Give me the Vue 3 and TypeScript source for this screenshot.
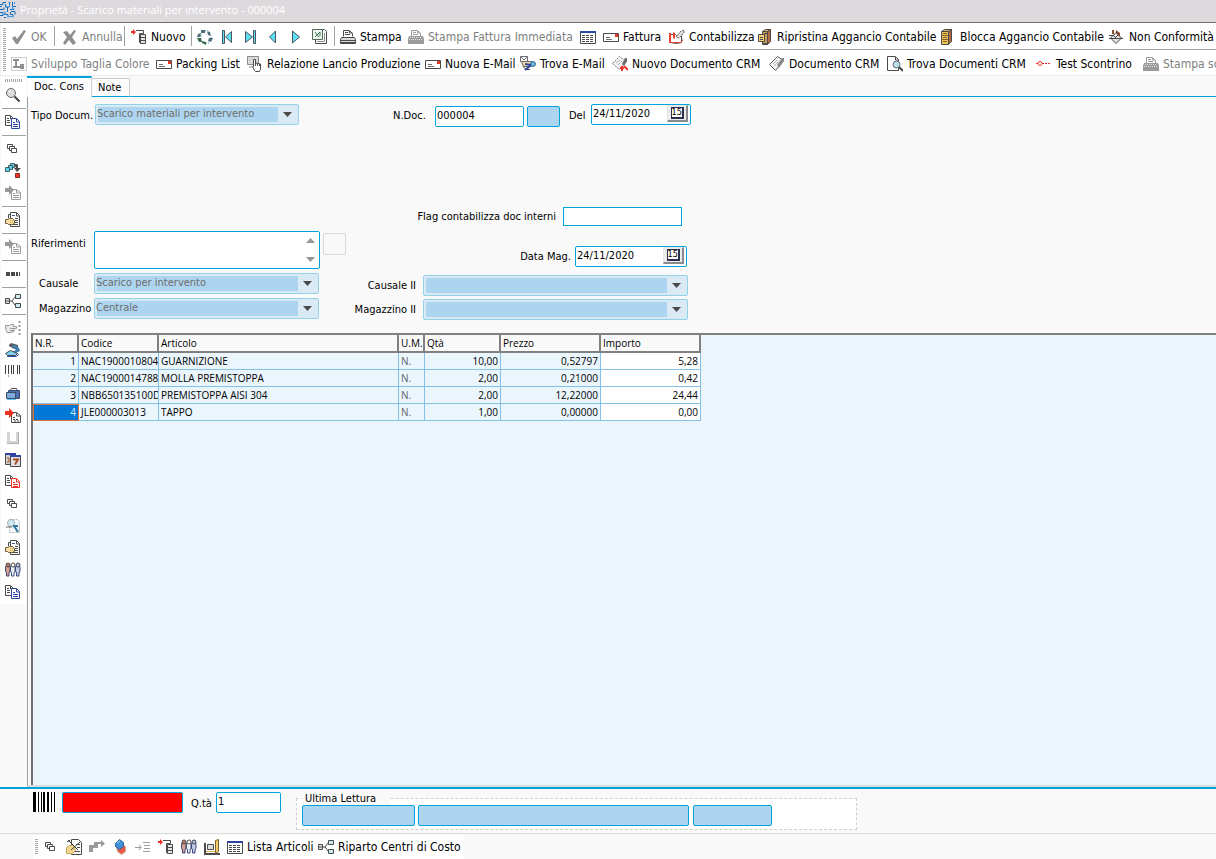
<script setup lang="ts">
import { ref } from 'vue'

interface Tool {
  icon?: string
  label?: string
  title?: string
  disabled?: boolean
  separator?: boolean
}

interface Line {
  nr: number
  codice: string
  articolo: string
  um: string
  qta: string
  prezzo: string
  importo: string
}

const mainTools: Tool[] = [
  { icon: 'check', label: 'OK', disabled: true },
  { separator: true },
  { icon: 'cross', label: 'Annulla', disabled: true },
  { separator: true },
  { icon: 'new', label: 'Nuovo' },
  { separator: true },
  { icon: 'refresh', title: 'Aggiorna' },
  { icon: 'first', title: 'Primo' },
  { icon: 'last', title: 'Ultimo' },
  { icon: 'prev', title: 'Precedente' },
  { icon: 'next', title: 'Successivo' },
  { icon: 'excel', title: 'Excel' },
  { separator: true },
  { icon: 'printer', label: 'Stampa' },
  { icon: 'printer-off', label: 'Stampa Fattura Immediata', disabled: true },
  { icon: 'grid', title: 'Griglia' },
  { icon: 'mail', label: 'Fattura' },
  { icon: 'ledger', label: 'Contabilizza' },
  { icon: 'cabinet-open', label: 'Ripristina Aggancio Contabile' },
  { icon: 'cabinet', label: 'Blocca Aggancio Contabile' },
  { icon: 'diamond', label: 'Non Conformità' },
]

const crmTools: Tool[] = [
  { icon: 'size', label: 'Sviluppo Taglia Colore', disabled: true },
  { icon: 'mail', label: 'Packing List' },
  { icon: 'touch', label: 'Relazione Lancio Produzione' },
  { icon: 'mail', label: 'Nuova E-Mail' },
  { icon: 'mail-find', label: 'Trova E-Mail' },
  { icon: 'crm-new', label: 'Nuovo Documento CRM' },
  { icon: 'crm', label: 'Documento CRM' },
  { icon: 'page-find', label: 'Trova Documenti CRM' },
  { icon: 'link', label: 'Test Scontrino' },
  { icon: 'printer-off', label: 'Stampa scontrino', disabled: true },
]

const sideTools: Tool[] = [
  { icon: 'search', title: 'Cerca' },
  { separator: true },
  { icon: 'copy', title: 'Copia' },
  { separator: true },
  { icon: 'stack', title: 'Finestre' },
  { icon: 'flow', title: 'Flusso' },
  { icon: 'import-off', title: 'Importa', disabled: true },
  { separator: true },
  { icon: 'hand-page', title: 'Documento' },
  { separator: true },
  { icon: 'import-off', title: 'Importa riga', disabled: true },
  { separator: true },
  { icon: 'dots', title: 'Altro' },
  { separator: true },
  { icon: 'tree', title: 'Struttura' },
  { separator: true },
  { icon: 'point-off', title: 'Indica', disabled: true },
  { icon: 'scanner', title: 'Scanner' },
  { icon: 'barcode', title: 'Codice a barre' },
  { icon: 'case', title: 'Cartella' },
  { icon: 'import', title: 'Carica' },
  { icon: 'tray-off', title: 'Vassoio', disabled: true },
  { icon: 'calendar', title: 'Calendario' },
  { icon: 'copy-red', title: 'Duplica' },
  { icon: 'stack', title: 'Riepilogo' },
  { icon: 'page-zoom', title: 'Anteprima' },
  { icon: 'hand-page', title: 'Apri' },
  { icon: 'people', title: 'Contatti' },
  { icon: 'copy', title: 'Copia documento' },
]

const footTools: Tool[] = [
  { icon: 'stack', title: 'Finestre' },
  { icon: 'edit', title: 'Modifica' },
  { icon: 'step-off', title: 'Passo', disabled: true },
  { icon: 'gems', title: 'Varianti' },
  { icon: 'indent-off', title: 'Rientro', disabled: true },
  { icon: 'new', title: 'Nuova riga' },
  { icon: 'people', title: 'Contatti' },
  { icon: 'machine', title: 'Risorse' },
  { icon: 'grid', label: 'Lista Articoli' },
  { icon: 'tree', label: 'Riparto Centri di Costo' },
]

const lines: Line[] = [
  { nr: 1, codice: 'NAC1900010804', articolo: 'GUARNIZIONE', um: 'N.', qta: '10,00', prezzo: '0,52797', importo: '5,28' },
  { nr: 2, codice: 'NAC1900014788', articolo: 'MOLLA PREMISTOPPA', um: 'N.', qta: '2,00', prezzo: '0,21000', importo: '0,42' },
  { nr: 3, codice: 'NBB650135100D', articolo: 'PREMISTOPPA AISI 304', um: 'N.', qta: '2,00', prezzo: '12,22000', importo: '24,44' },
  { nr: 4, codice: 'JLE000003013', articolo: 'TAPPO', um: 'N.', qta: '1,00', prezzo: '0,00000', importo: '0,00' },
]

const selected = ref(4)
const numero = ref('000004')
const del = ref('24/11/2020')
const dataMag = ref('24/11/2020')
const quantita = ref('1')
</script>

<template>
  <div class="window">
    <svg class="defs" aria-hidden="true">
      <symbol id="i-check" viewBox="0 0 16 16"><path d="M1 9l3-2 2 3 7-9 2 1-8 13H5z" fill="#8f8f8f" /></symbol>
      <symbol id="i-cross" viewBox="0 0 16 16"><path d="M1 3l4-1 3 4 4-5 2 1-4 6 4 6-3 2-4-5-4 5-2-2 4-6z" fill="#8f8f8f" /></symbol>
      <symbol id="i-new" viewBox="0 0 16 16">
        <path d="M0 2h2V0l3 3-3 3V4H0z" fill="#ee2f24" />
        <path d="M5 1.500h7.500v3h-4v9h2" fill="none" stroke="#4a4a4a" />
        <path d="M9.500 5.500h5v9h-5z" fill="#e6e6e6" stroke="#4a4a4a" />
        <path d="M9 8.500h6M9 11.500h6" stroke="#4a4a4a" />
      </symbol>
      <symbol id="i-refresh" viewBox="0 0 16 16">
        <path d="M4 1h4v3H4zM1 5l3-1v4H0zM10 2l3 1 1 4-3-1zM12 9h4l-2 4-3-1z" fill="#4f6f78" />
        <path d="M0 9h4l1 4H2zM5 12l4 1v3l-4-2z" fill="#3e6b4f" />
        <path d="M8 2h3M4 5v3M9 14h3M14 6v3" stroke="#a9c8d0" stroke-width="2" stroke-dasharray="1 1" />
      </symbol>
      <symbol id="i-first" viewBox="0 0 16 16"><path d="M2.500 1.500v13h2v-13z" fill="#5fe0f2" stroke="#4a5560" /><path d="M11.500 2.500v11L5.500 8z" fill="#5fe0f2" stroke="#4a5560" /></symbol>
      <symbol id="i-last" viewBox="0 0 16 16"><path d="M10.500 1.500v13h2v-13z" fill="#5fe0f2" stroke="#4a5560" /><path d="M2.500 2.500v11L9.500 8z" fill="#5fe0f2" stroke="#4a5560" /></symbol>
      <symbol id="i-prev" viewBox="0 0 16 16"><path d="M9.500 2v12L3.500 8z" fill="#5fe0f2" stroke="#4a5560" /></symbol>
      <symbol id="i-next" viewBox="0 0 16 16"><path d="M4.500 2v12L11.500 8z" fill="#5fe0f2" stroke="#4a5560" /></symbol>
      <symbol id="i-excel" viewBox="0 0 16 16">
        <path d="M4.500 3.500v11h11v-12l-2-2h-3" fill="#fff" stroke="#4a4a4a" />
        <path d="M1.500.5h10v10h-10z" fill="#f4f8f4" stroke="#4f6b58" />
        <path d="M4 3l4 5M9 3L4 8M8 4h2M8 6h2" stroke="#2f7a4a" />
        <path d="M13.500 4v8.500H6" fill="none" stroke="#8a8a8a" />
      </symbol>
      <symbol id="i-printer" viewBox="0 0 16 16">
        <path d="M3.500 7.500v-6h6l3 3v3" fill="#fff" stroke="#4a4a4a" />
        <path d="M5 3.500h3M5 5.500h5M9.500 2v2h3" fill="none" stroke="#4a4a4a" />
        <path d="M1.500 8.500h13l1 2v4H.5v-4z" fill="#d8d8d8" stroke="#4a4a4a" />
        <path d="M1 11.500h14M1 13.500h14" stroke="#4a4a4a" />
      </symbol>
      <symbol id="i-printer-off" viewBox="0 0 16 16">
        <path d="M3.500 7.500v-6h6l3 3v3" fill="#fff" stroke="#9a9a9a" />
        <path d="M5 3.500h3M5 5.500h5M9.500 2v2h3" fill="none" stroke="#9a9a9a" />
        <path d="M1 7h14l1 3v5H0v-5z" fill="#9a9a9a" />
        <path d="M2 8.500h12M1 10.500h14" stroke="#e2e2e2" stroke-dasharray="1 1" />
      </symbol>
      <symbol id="i-grid" viewBox="0 0 16 16">
        <path d="M.5 2.500h15v12H.5z" fill="#fff" stroke="#4a4a4a" />
        <path d="M0 2h16v2H0z" fill="#2f45a4" />
        <path d="M2 6.500h12M2 8.500h12M2 10.500h12M2 12.500h12" stroke="#4a4a4a" stroke-dasharray="3 1" />
      </symbol>
      <symbol id="i-mail" viewBox="0 0 16 16">
        <path d="M.5 4.500h15v8H.5z" fill="#fff" stroke="#4a4a4a" />
        <path d="M12 5h3v3h-3z" fill="#e8372c" />
        <path d="M3 8.500h4M3 10.500h6" stroke="#6f6f6f" />
      </symbol>
      <symbol id="i-ledger" viewBox="0 0 16 16">
        <path d="M1.500 5.500h5l1 1h5v7l-5 1-6-1z" fill="#fff" stroke="#4a4a4a" />
        <path d="M0 4h2v10H0zM4 3l2 1v6l-2-1z" fill="#ee4030" />
        <path d="M7 8l5-6 3-1v3l-5 5z" fill="#ddd" stroke="#6a6a6a" stroke-dasharray="2 1" /><path d="M2 13.500h10l2-3" fill="none" stroke="#ee4030" />
      </symbol>
      <symbol id="i-cabinet-open" viewBox="0 0 16 16">
        <path d="M5.500 2.500l3-2h5l-3 2z" fill="#d9b25e" stroke="#4a4a4a" /><path d="M5.500 2.500h5v13h-5z" fill="#c9a05a" stroke="#4a4a4a" />
        <path d="M10.500 2.500l3-2v12l-3 3z" fill="#b06c45" stroke="#4a4a4a" />
        <path d="M1.500 5.500h6v7h-6z" fill="#f4d270" stroke="#4a4a4a" /><path d="M3 8.500h3M3 10.500h3M6 14.500h4M7 4.500h3" stroke="#4a4a4a" />
      </symbol>
      <symbol id="i-cabinet" viewBox="0 0 16 16">
        <path d="M1.500 2.500l3-2h7l-3 2z" fill="#d9b25e" stroke="#4a4a4a" /><path d="M1.500 2.500h7v13h-7z" fill="#f1c858" stroke="#4a4a4a" />
        <path d="M8.500 2.500l3-2v12l-3 3z" fill="#b06c45" stroke="#4a4a4a" /><path d="M1 6.500h7M1 10.500h7M3 4.500h4M3 8.500h4M3 12.500h4" stroke="#7a5f2a" />
      </symbol>
      <symbol id="i-diamond" viewBox="0 0 16 16">
        <path d="M1.500 9L7 3.500 12.500 9 7 14.500z" fill="#e2e2e2" stroke="#4a4a4a" />
        <path d="M3 1h2v4H3zM7 1l4 3v4L7 4z" fill="#8c4a30" /><path d="M0 6.500h4M0 9.500h14M4 6l4 4M10 5l-5 5" stroke="#4a4a4a" />
      </symbol>
      <symbol id="i-size" viewBox="0 0 16 16">
        <path d="M.5 1.500h15v13H.5z" fill="none" stroke="#9a9a9a" stroke-dasharray="1 1" />
        <path d="M2 3h6v2H6v5h3V8h4v5H9v-1H2v-2h2V5H2z" fill="#8f8f8f" />
      </symbol>
      <symbol id="i-touch" viewBox="0 0 16 16">
        <path d="M.5.500h11v8H.5z" fill="#d8d8d8" stroke="#8a8a8a" /><path d="M2 11h3" stroke="#8a8a8a" />
        <path d="M5.500 10.500l2 4 1 1h4l1-2V8l-5-1V3.500h-2v7z" fill="#fff" stroke="#4a4a4a" /><path d="M8.500 6v4M10.500 8v2M12.500 8v2" stroke="#4a4a4a" />
      </symbol>
      <symbol id="i-mail-find" viewBox="0 0 16 16">
        <path d="M.5.500h7v5h-7zM1 1l3 3 3-3" fill="#fff" stroke="#6a6a6a" />
        <path d="M1.500 5.500h10v5h-8z" fill="#f0dca0" stroke="#6a6a6a" /><path d="M3 10.500l3 3h4" fill="none" stroke="#4a4a4a" />
        <circle cx="13" cy="8" r="2.500" fill="#5fb8e8" stroke="#4a6a8a" /><path d="M10 10l-5 4M5 8l6 1" stroke="#2f45a4" stroke-width="2" />
      </symbol>
      <symbol id="i-crm-new" viewBox="0 0 16 16">
        <path d="M.5 7.500l7-7 7 5-7 8z" fill="#f2f2f2" stroke="#7a7a7a" stroke-dasharray="2 1" /><path d="M4 7l4-3M6 9l4-4" stroke="#b5b5b5" />
        <path d="M10 8l3-6h2v3l-3 5z" fill="#6a6a6a" /><path d="M8 12h4M10 10v5M12 10l4 4" stroke="#e8372c" stroke-width="2" />
      </symbol>
      <symbol id="i-crm" viewBox="0 0 16 16">
        <path d="M.5 8.500l8-8 6 4-8 10z" fill="#f2f2f2" stroke="#5a5a5a" /><path d="M4 8l4-4M5 10l4-4" stroke="#b5b5b5" />
        <path d="M8 9l5-7h2v3l-5 7z" fill="#8a8a8a" />
      </symbol>
      <symbol id="i-page-find" viewBox="0 0 16 16">
        <path d="M.5.500h8l3 3v11H.5z" fill="#fff" stroke="#4a4a4a" /><path d="M8.500 1v3h3" fill="none" stroke="#4a4a4a" />
        <circle cx="9.500" cy="8.500" r="3.500" fill="#b6dff0" stroke="#6a6a6a" /><path d="M12 11l4 4" stroke="#4a4a4a" stroke-width="2" />
      </symbol>
      <symbol id="i-link" viewBox="0 0 16 16"><circle cx="4" cy="7.500" r="2" fill="#fff" stroke="#ee2f24" /><path d="M0 7.500h2M6 7.500h9" stroke="#ee2f24" stroke-dasharray="2 1" /></symbol>
      <symbol id="i-search" viewBox="0 0 16 16"><circle cx="6" cy="6" r="4.500" fill="#dcdcdc" stroke="#6a6a6a" /><path d="M9.500 9.500l5 5" stroke="#3f3f3f" stroke-width="2" /><path d="M4 5l2-2" stroke="#fff" /></symbol>
      <symbol id="i-copy" viewBox="0 0 16 16">
        <path d="M.5 1.500h5l3 3v7h-8z" fill="#fff" stroke="#4a4a4a" />
        <path d="M5.500 2v3h3M2 4.500h2M2 6.500h3M2 8.500h3" fill="none" stroke="#4a4a4a" />
        <path d="M6.500 4.500h5l3 3v7h-8z" fill="#fff" stroke="#2f45a4" />
        <path d="M11.500 5v3h3M8 8.500h2M8 10.500h5M8 12.500h5" fill="none" stroke="#2f45a4" />
      </symbol>
      <symbol id="i-copy-red" viewBox="0 0 16 16">
        <path d="M.5 1.500h5l3 3v7h-8z" fill="#fff" stroke="#4a4a4a" />
        <path d="M5.500 2v3h3M2 4.500h2M2 6.500h3M2 8.500h3" fill="none" stroke="#4a4a4a" />
        <path d="M6.500 4.500h5l3 3v6h-8z" fill="#fff" stroke="#ee2f24" />
        <path d="M11.500 5v3h3M8 8.500h2M8 10.500h5M8 12.500h5" fill="none" stroke="#ee2f24" />
      </symbol>
      <symbol id="i-stack" viewBox="0 0 16 16">
        <path d="M2.500 3.500h5v4h-5z" fill="#fff" stroke="#4a4a4a" /><path d="M4.500 5.500h5v4h-5z" fill="#fff" stroke="#4a4a4a" /><path d="M6.500 7.500h5v4h-5z" fill="#fff" stroke="#4a4a4a" />
      </symbol>
      <symbol id="i-flow" viewBox="0 0 16 16">
        <path d="M5.500.500h4v4h-4z" fill="#5fd3ee" stroke="#3f5f66" /><path d="M3.500 2.500h4v4h-4z" fill="#5fd3ee" stroke="#3f5f66" /><path d="M.5 4.500h4v4h-4z" fill="#5fd3ee" stroke="#3f5f66" />
        <path d="M9 1h3l1 1v3h3l-4 4-3-4h2z" fill="#4a4a4a" /><path d="M10.500 10.500h4v4h-4z" fill="#ee2f24" stroke="#8a2a20" />
      </symbol>
      <symbol id="i-import-off" viewBox="0 0 16 16">
        <path d="M6.500 4.500h5l4 3v7h-9z" fill="#fff" stroke="#9a9a9a" /><path d="M11.500 5v3h4M8 8.500h2M8 10.500h6M8 12.500h6" fill="none" stroke="#9a9a9a" /><path d="M0 3h4V0l5 5-5 5V7H0z" fill="#9a9a9a" />
      </symbol>
      <symbol id="i-import" viewBox="0 0 16 16">
        <path d="M6.500 4.500h5l4 3v7h-9z" fill="#fff" stroke="#4a4a4a" /><path d="M11.500 5v3h4" fill="none" stroke="#4a4a4a" /><path d="M8 9.500h2M8 11.500h6M9 13h5" stroke="#4a4a4a" stroke-dasharray="2 1" /><path d="M0 3h4V0l5 5-5 5V7H0z" fill="#ee2f24" />
      </symbol>
      <symbol id="i-hand-page" viewBox="0 0 16 16">
        <path d="M5.500 14.500v-14h6l3 3v11z" fill="#fff" stroke="#4a4a4a" /><path d="M11.500 1v3h3M3.500 6V2.500h2" fill="none" stroke="#4a4a4a" /><path d="M7 3.500h3" stroke="#3a55a8" /><path d="M10 6.500h3M10 8.500h3M10 10.500h3M7 12.500h6" stroke="#4a4a4a" />
        <path d="M.5 7.500h2l2-1h3l2 2v3l-2 1h-4l-1-1h-2z" fill="#f6dfa2" stroke="#6a5a3a" /><path d="M5 8.500h3M5 10.500h4" stroke="#c9a85a" stroke-dasharray="1 1" />
      </symbol>
      <symbol id="i-dots" viewBox="0 0 16 16"><path d="M1 6h4v4H1zM6 6h4v4H6zM11 6h2v4h-2zM14 6h1v4h-1z" fill="#4a4a4a" /></symbol>
      <symbol id="i-tree" viewBox="0 0 16 16">
        <path d="M.5 5.500h4v5h-4z" fill="#e4e4e4" stroke="#4a4a4a" /><path d="M1 8h3M5 8h2M7 8l3-4M7 8l3 4" stroke="#4a4a4a" />
        <path d="M10.500 1.500h5v4h-5zM10.500 10.500h5v4h-5z" fill="#cdeaf0" stroke="#4a4a4a" />
      </symbol>
      <symbol id="i-point-off" viewBox="0 0 16 16">
        <path d="M.5 5.500h4l1-1h3v2h3v2H9v3l-3 1H2l-1-2z" fill="#e8e8e8" stroke="#9a9a9a" /><path d="M5 8.500h4M5 10.500h4" stroke="#9a9a9a" /><path d="M14.500 1v14" stroke="#9a9a9a" stroke-width="2" stroke-dasharray="2 2" />
      </symbol>
      <symbol id="i-scanner" viewBox="0 0 16 16">
        <path d="M4 3l2-2 7 2v2l-4 2-5-3z" fill="#5a5a5a" /><path d="M6 4l4-1 4 3 1 3-4 2-4-1 4-2z" fill="#3f7fae" />
        <path d="M.5 11.500l5-3 7 3-2 2h-8z" fill="#7fd0f0" stroke="#4a4a4a" /><path d="M2 14.500h9l3-2" fill="none" stroke="#2f45a4" />
      </symbol>
      <symbol id="i-barcode" viewBox="0 0 16 16"><path d="M.5 1v9M3.500 1v9M6.500 1v9M12.500 1v9" stroke="#3f3f3f" /><path d="M8.500 1v9M14.500 1v9" stroke="#3f3f3f" /><path d="M3 12h1" stroke="#3f3f3f" /></symbol>
      <symbol id="i-case" viewBox="0 0 16 16">
        <path d="M4.500 5.500l2-3h5l1 3" fill="#fff" stroke="#4a4a4a" /><path d="M3.500 4.500h11v8h-11z" fill="#4a6fb5" stroke="#3d4a63" /><path d="M1.500 6.500h9v6h-9z" fill="#7fa8dc" stroke="#3d4a63" /><path d="M2 13.500h9" stroke="#5fc8ee" />
      </symbol>
      <symbol id="i-tray-off" viewBox="0 0 16 16"><path d="M2 2h3v9h6V2h3v12H2z" fill="#d4d4d4" /><path d="M2 13.500h12M13.500 2v12" stroke="#b0b0b0" /></symbol>
      <symbol id="i-calendar" viewBox="0 0 16 16">
        <path d="M.5 1.500h10v11H.5z" fill="#d8d0d0" stroke="#4a4a4a" /><path d="M0 1h11v2H0z" fill="#2f45a4" /><path d="M2 6h2v4H2" fill="none" stroke="#a0522d" />
        <path d="M5.500 3.500h10v11h-10z" fill="#e4e0e0" stroke="#4a4a4a" /><path d="M5 3h11v2H5z" fill="#2f45a4" /><path d="M8 7.500h5l-3 5" fill="none" stroke="#a0522d" stroke-width="2" />
      </symbol>
      <symbol id="i-page-zoom" viewBox="0 0 16 16">
        <path d="M4.500 1.500h8l2 2v11h-10z" fill="#f4f8fa" stroke="#b5b5b5" stroke-dasharray="2 1" /><circle cx="6" cy="5" r="3.500" fill="#cfeaf2" stroke="#9ab0b8" />
        <path d="M8 8h5M9 8l4 6" stroke="#2f75a4" stroke-width="2" /><path d="M1 9h6" stroke="#6a6a6a" />
      </symbol>
      <symbol id="i-people" viewBox="0 0 16 16">
        <path d="M1.500 14V11L.5 9V4.500l2-1h1l1.500 1V9l-1 2v3z" fill="#d8a090" stroke="#3f4a7a" /><path d="M6.500 14V11l-1-2V4.500l2-1h1l1.500 1V9l-1 2v3z" fill="#eef4fa" stroke="#3f4a7a" /><path d="M11.500 14V11l-1-2V4.500l2-1h1l1.500 1V9l-1 2v3z" fill="#c2cce8" stroke="#3f4a7a" />
        <circle cx="3" cy="3" r="2" fill="#c07860" stroke="#4a4a4a" /><circle cx="8" cy="3" r="2" fill="#fff" stroke="#4a4a4a" /><circle cx="13" cy="3" r="2" fill="#a8b8e0" stroke="#4a4a4a" />
      </symbol>
      <symbol id="i-edit" viewBox="0 0 16 16">
        <path d="M5.500 15.500V.500h7l3 3v12z" fill="#fff" stroke="#4a4a4a" /><path d="M10 5.500h4M11 8.500h3M9 12.500h5" stroke="#4a4a4a" />
        <path d="M.5 8.500l3-2h4l2 5-3 3h-6z" fill="#f2d78c" stroke="#c9a85a" /><path d="M2 1l10 10M14 3L5 11M1 3l3-2" stroke="#3f3f3f" />
      </symbol>
      <symbol id="i-step-off" viewBox="0 0 16 16"><path d="M0 6h5V3h7V1l4 3.500L12 8V5H9v4H4v4H0z" fill="#9a9a9a" /></symbol>
      <symbol id="i-gems" viewBox="0 0 16 16">
        <path d="M4.500 7.500l4-3 5 3v5l-4 3-4-3z" fill="#e85a45" stroke="#c8a8a0" /><path d="M3.500 4.500l4-4 4 3v4l-4 3-4-3z" fill="#3f8fd8" stroke="#2f5f9a" /><path d="M5 4l3-2" stroke="#a8d8f4" />
      </symbol>
      <symbol id="i-indent-off" viewBox="0 0 16 16"><path d="M0 8.500h6M4 6l2 2.500L4 11" fill="none" stroke="#9a9a9a" /><path d="M8 3.500h7M9 6.500h6M9 9.500h6M8 12.500h7" stroke="#9a9a9a" /></symbol>
      <symbol id="i-machine" viewBox="0 0 16 16">
        <path d="M1 4v11h15" fill="none" stroke="#4a4a4a" stroke-width="2" /><path d="M3.500 5.500h6v5h-6z" fill="#dedede" stroke="#4a4a4a" /><path d="M11.500 1.500l3-1v12l-3 2z" fill="#f1cf6a" stroke="#7a5f2a" /><path d="M2 12.500h9" stroke="#e0b050" />
      </symbol>
      <symbol id="i-logo" viewBox="0 0 16 16">
        <path d="M0 2.500h3v-2h3M5.500 2v3h4v-4M12.500 0v4.500h3.500M0 7.500h4v-2M7.500 5v5M0 10.500h3v3H0M10 7.500h4v-1M5 9.500v3h3v3M10.500 10v2.500h2.500v3M11 9.500h4v3M4 15.500h2M0 4.500h2" fill="none" stroke="#0d6fc4" />
        <path d="M8.500.5h2M9.500 2v3M14.500 0v2M3 12.500h3M9 14.500h3M12.500 5v3" stroke="#3d96da" />
      </symbol>
      <symbol id="i-code" viewBox="0 0 23 20">
        <path d="M1.500 0v20" stroke="#000" stroke-width="3" /><path d="M5.500 0v20M8.500 0v20" stroke="#000" /><path d="M11 0v20M15 0v20" stroke="#000" stroke-width="2" /><path d="M18.500 0v20M21.500 0v20" stroke="#000" />
      </symbol>
    </svg>

    <header class="titlebar">
      <svg class="icon"><use href="#i-logo" /></svg>
      <h1>Proprietà - Scarico materiali per intervento - 000004</h1>
    </header>

    <div class="toolbars">
      <span class="grip grip-v"></span>
      <div class="rows">
        <div class="bar bar-main" role="toolbar" aria-label="Documento">
          <template v-for="(t, i) in mainTools" :key="i">
            <span v-if="t.separator" class="sep"></span>
            <button v-else type="button" class="tool" :disabled="t.disabled" :aria-label="t.label ?? t.title">
              <svg class="icon"><use :href="'#i-' + t.icon" /></svg>
              <span v-if="t.label">{{ t.label }}</span>
            </button>
          </template>
        </div>
        <div class="bar bar-crm" role="toolbar" aria-label="CRM">
          <button v-for="t in crmTools" :key="t.label" type="button" class="tool" :disabled="t.disabled">
            <svg class="icon"><use :href="'#i-' + t.icon" /></svg>
            <span>{{ t.label }}</span>
          </button>
        </div>
      </div>
    </div>

    <div class="body">
      <aside class="side">
        <div class="side-panel" role="toolbar" aria-label="Strumenti">
          <span class="grip grip-h"></span>
          <template v-for="(t, i) in sideTools" :key="i">
            <span v-if="t.separator" class="side-sep"></span>
            <button v-else type="button" class="side-tool" :disabled="t.disabled" :aria-label="t.title">
              <svg class="icon"><use :href="'#i-' + t.icon" /></svg>
            </button>
          </template>
        </div>
      </aside>

      <main class="content">
        <nav class="tabs">
          <button type="button" class="tab active">Doc. Cons</button>
          <button type="button" class="tab">Note</button>
        </nav>

        <form class="form" @submit.prevent>
          <div class="head-row">
            <label class="w-label" for="tipo">Tipo Docum.</label>
            <span class="combo combo-tipo">
              <select id="tipo"><option>Scarico materiali per intervento</option></select>
              <svg class="arrow" viewBox="0 0 9 5"><path d="M0 0h9L4.500 5z" fill="#4a4a4a" /></svg>
            </span>
            <label class="ndoc-label" for="ndoc">N.Doc.</label>
            <input id="ndoc" v-model="numero" class="box ndoc" type="text" />
            <input class="box filled serie" type="text" aria-label="Serie" />
            <label class="del-label" for="del">Del</label>
            <span class="date date-del">
              <input id="del" v-model="del" type="text" />
              <button type="button" class="cal" aria-label="Calendario"><span>15</span></button>
            </span>
          </div>

          <div class="detail">
            <div class="left">
              <div class="field memo-row">
                <label class="w-label" for="rif">Riferimenti</label>
                <span class="memo">
                  <textarea id="rif"></textarea>
                  <svg class="spin" viewBox="0 0 9 24"><path d="M0 5h9L4.500 0zM0 19h9L4.500 24z" fill="#969696" /></svg>
                </span>
                <button type="button" class="blank" aria-label="Seleziona riferimento"></button>
              </div>
              <div class="field">
                <label class="w-label indent" for="causale">Causale</label>
                <span class="combo combo-left">
                  <select id="causale"><option>Scarico per intervento</option></select>
                  <svg class="arrow" viewBox="0 0 9 5"><path d="M0 0h9L4.500 5z" fill="#4a4a4a" /></svg>
                </span>
              </div>
              <div class="field">
                <label class="w-label indent" for="magazzino">Magazzino</label>
                <span class="combo combo-left">
                  <select id="magazzino"><option>Centrale</option></select>
                  <svg class="arrow" viewBox="0 0 9 5"><path d="M0 0h9L4.500 5z" fill="#4a4a4a" /></svg>
                </span>
              </div>
            </div>

            <div class="right">
              <div class="field flag-row">
                <label class="flag-label" for="flag">Flag contabilizza doc interni</label>
                <input id="flag" class="box flag" type="text" />
              </div>
              <div class="field date-row">
                <label class="mag-label" for="datamag">Data Mag.</label>
                <span class="date date-mag">
                  <input id="datamag" v-model="dataMag" type="text" />
                  <button type="button" class="cal" aria-label="Calendario"><span>15</span></button>
                </span>
              </div>
              <div class="field">
                <label class="two-label" for="causale2">Causale II</label>
                <span class="combo combo-right">
                  <select id="causale2"><option></option></select>
                  <svg class="arrow" viewBox="0 0 9 5"><path d="M0 0h9L4.500 5z" fill="#4a4a4a" /></svg>
                </span>
              </div>
              <div class="field">
                <label class="two-label" for="magazzino2">Magazzino II</label>
                <span class="combo combo-right">
                  <select id="magazzino2"><option></option></select>
                  <svg class="arrow" viewBox="0 0 9 5"><path d="M0 0h9L4.500 5z" fill="#4a4a4a" /></svg>
                </span>
              </div>
            </div>
          </div>
        </form>

        <section class="sheet">
          <div class="sheet-area">
            <table>
              <colgroup>
                <col class="c-nr" /><col class="c-cod" /><col class="c-art" /><col class="c-um" /><col class="c-qta" /><col class="c-num" /><col class="c-num" />
              </colgroup>
              <thead>
                <tr><th>N.R.</th><th>Codice</th><th>Articolo</th><th>U.M.</th><th>Qtà</th><th>Prezzo</th><th>Importo</th></tr>
              </thead>
              <tbody>
                <tr v-for="l in lines" :key="l.nr" @click="selected = l.nr">
                  <td class="num" :class="{ current: l.nr === selected }">{{ l.nr }}</td>
                  <td>{{ l.codice }}</td>
                  <td>{{ l.articolo }}</td>
                  <td class="dim">{{ l.um }}</td>
                  <td class="num">{{ l.qta }}</td>
                  <td class="num">{{ l.prezzo }}</td>
                  <td class="num white">{{ l.importo }}</td>
                </tr>
              </tbody>
            </table>
          </div>
        </section>
      </main>
    </div>

    <section class="reader">
      <svg class="code"><use href="#i-code" /></svg>
      <input class="box red" type="text" aria-label="Codice a barre" />
      <label class="qta-label" for="qta">Q.tà</label>
      <input id="qta" v-model="quantita" class="box qta" type="text" />
      <fieldset class="last">
        <legend>Ultima Lettura</legend>
        <input class="box filled last-code" type="text" aria-label="Codice letto" />
        <input class="box filled last-name" type="text" aria-label="Articolo letto" />
        <input class="box filled last-qty" type="text" aria-label="Quantità letta" />
      </fieldset>
    </section>

    <footer class="foot">
      <div class="foot-panel" role="toolbar" aria-label="Righe">
        <span class="grip grip-f"></span>
        <button v-for="(t, i) in footTools" :key="i" type="button" class="tool" :disabled="t.disabled" :aria-label="t.label ?? t.title">
          <svg class="icon"><use :href="'#i-' + t.icon" /></svg>
          <span v-if="t.label">{{ t.label }}</span>
        </button>
      </div>
    </footer>
  </div>
</template>

<style>
body {
  margin: 0;
  background: #f9f9f9;
}
</style>

<style scoped>
* {
  box-sizing: border-box;
}

.window {
  display: flex;
  flex-direction: column;
  min-height: 100vh;
  overflow: hidden;
  background: #f9f9f9;
  color: #000;
  font: 11px/14px 'DejaVu Sans Condensed', Tahoma, 'DejaVu Sans', sans-serif;
}

button,
input,
select,
textarea {
  margin: 0;
  font: inherit;
  color: inherit;
}

.defs {
  position: absolute;
  width: 0;
  height: 0;
}

.icon {
  flex: none;
  width: 16px;
  height: 16px;
}

.titlebar {
  display: flex;
  align-items: center;
  gap: 4px;
  height: 23px;
  padding-bottom: 2px;
  background: #ddd9dd;
  border-bottom: 1px solid #6d6d6d;
}

.titlebar h1 {
  margin: 0;
  font: 400 11px/16px 'Open Sans', 'Segoe UI', sans-serif;
  color: #fff;
}

.toolbars {
  display: flex;
  gap: 2px;
  padding-left: 2px;
  background: #fff;
  border-left: 1px solid #f0f0f0;
  border-bottom: 1px solid #ececec;
}

.grip {
  flex: none;
}

.grip-v,
.grip-f {
  width: 3px;
  background: repeating-linear-gradient(#a6a6a6 0 1px, #fff 1px 2px);
}

.grip-v {
  margin: 5px 0 4px;
}

.rows {
  flex: 1;
  min-width: 0;
}

.bar {
  display: grid;
  padding: 2px 0 0 3px;
  font-size: 12px;
}

.bar-main {
  grid-template-columns: 43px 8px 62px 7px 60px 6px 23px 23px 23px 22px 23px 23px 6px 68px 172px 23px 66px 88px 183px 169px auto;
  height: 27px;
  border-bottom: 1px solid #a0a0a0;
}

.bar-crm {
  grid-template-columns: 145px 91px 178px 95px 92px 157px 118px 149px 107px auto;
  height: 25px;
}

.sep {
  width: 1px;
  height: 20px;
  margin-top: 1px;
  background: #a0a0a0;
}

.tool {
  display: flex;
  align-items: center;
  gap: 4px;
  min-width: 0;
  padding: 0;
  border: 0;
  background: none;
  white-space: nowrap;
}

.tool:disabled {
  color: #808080;
}

.body {
  display: flex;
  flex: 1;
}

.side {
  width: 27px;
  padding: 1px 0 0 1px;
}

.side-panel {
  display: flex;
  flex-direction: column;
  width: 25px;
  padding-bottom: 1px;
  background: #fff;
}

.grip-h {
  height: 3px;
  margin: 2px 4px;
  background: repeating-linear-gradient(90deg, #a6a6a6 0 1px, #fff 1px 2px);
}

.side-tool {
  display: flex;
  align-items: center;
  height: 22px;
  padding: 0 0 0 4px;
  border: 0;
  background: none;
}

.side-sep {
  height: 1px;
  margin: 2px 0 2px 1px;
  background: #a0a0a0;
}

.content {
  display: flex;
  flex: 1;
  flex-direction: column;
  min-width: 0;
}

.tabs {
  display: flex;
  align-items: flex-end;
  height: 21px;
}

.tabs::after {
  content: '';
  flex: 1;
  height: 1px;
  background: #00a3dc;
}

.tab {
  height: 19px;
  padding: 1px 8px 0 6px;
  border: 1px solid #c8d2d2;
  border-left: 0;
  border-bottom: 1px solid #00a3dc;
  background: #fbfbfb;
}

.tab.active {
  width: 65px;
  height: 21px;
  padding: 0 6px 1px;
  border: 0;
  border-top: 2px solid #00a3dc;
  border-right: 1px solid #c8d2d2;
  background: #fdfdfd;
}

.form {
  padding: 7px 0 13px 3px;
  border-left: 1px solid #a0a0a0;
}

.head-row {
  display: flex;
  align-items: center;
  height: 24px;
}

.w-label {
  width: 63px;
  white-space: nowrap;
}

.indent {
  padding-left: 8px;
}

.combo {
  position: relative;
  display: block;
  height: 21px;
  border: 1px solid #93d3ea;
  border-radius: 2px;
  background: #daeaf5;
}

.combo select {
  display: block;
  width: 100%;
  height: 19px;
  padding: 0 18px 1px 1px;
  border: 0;
  appearance: none;
  color: #6d6d6d;
  background: linear-gradient(#aed5ef, #aed5ef) no-repeat 2px 2px / calc(100% - 22px) 15px;
}

.arrow {
  position: absolute;
  top: 7px;
  right: 6px;
  width: 9px;
  height: 5px;
  pointer-events: none;
}

.combo-tipo {
  width: 204px;
  margin: 0 94px 3px 1px;
}

.combo-left {
  width: 225px;
}

.combo-right {
  width: 265px;
}

.box {
  height: 21px;
  padding: 0 2px 2px 1px;
  border: 1px solid #00a3dc;
  border-radius: 2px;
  background: #fff;
}

.filled {
  background: #aed5ef;
}

.ndoc-label {
  width: 42px;
}

.ndoc {
  width: 89px;
  margin-right: 3px;
}

.serie {
  width: 33px;
  margin-right: 9px;
}

.del-label {
  width: 22px;
}

.date {
  display: flex;
  height: 21px;
  border: 1px solid #00a3dc;
  border-radius: 2px;
  background: #fff;
}

.date input {
  flex: 1;
  min-width: 0;
  padding: 0 0 2px 1px;
  border: 0;
  background: none;
}

.cal {
  display: flex;
  align-items: center;
  justify-content: center;
  width: 21px;
  height: 17px;
  margin-right: 2px;
  padding: 0;
  border: 1px solid #e6e6e6;
  border-right: 2px solid #8a8a8a;
  border-bottom: 2px solid #8a8a8a;
  background: #ececec;
}

.cal span {
  width: 13px;
  height: 12px;
  border: 1px solid #2c2c4c;
  border-width: 1px 2px 2px 1px;
  background: #fff;
  font-size: 9px;
  line-height: 9px;
}

.date-del {
  width: 100px;
  margin-bottom: 3px;
}

.date-mag {
  width: 112px;
}

.detail {
  display: flex;
  align-items: flex-end;
  gap: 8px;
  margin-top: 79px;
}

.left {
  display: flex;
  flex-direction: column;
  gap: 4px;
  width: 315px;
  padding-bottom: 1px;
}

.right {
  display: flex;
  flex-direction: column;
  align-items: flex-end;
  gap: 3px;
  width: 334px;
}

.field {
  display: flex;
  align-items: center;
}

.right label {
  text-align: right;
  white-space: nowrap;
}

.flag-label {
  margin-right: 7px;
}

.flag-row {
  padding-right: 6px;
  margin-bottom: 17px;
}

.flag {
  width: 119px;
  height: 19px;
  border-radius: 0;
}

.date-row {
  padding-right: 1px;
  margin-bottom: 5px;
}

.mag-label {
  margin-right: 4px;
}

.two-label {
  margin-right: 7px;
}

.memo-row {
  align-items: flex-start;
}

.memo-row label {
  margin-top: 6px;
}

.memo {
  position: relative;
  width: 226px;
  height: 38px;
}

.memo textarea {
  display: block;
  width: 100%;
  height: 38px;
  padding: 2px;
  border: 1px solid #00a3dc;
  border-radius: 2px;
  background: #fff;
  resize: none;
}

.spin {
  position: absolute;
  top: 7px;
  right: 5px;
  width: 9px;
  height: 24px;
}

.blank {
  width: 23px;
  height: 22px;
  margin: 2px 0 0 3px;
  border: 1px solid #d9d9d9;
  border-radius: 2px;
  background: #f9f9f9;
}

.sheet {
  display: flex;
  flex: 1;
  padding-left: 3px;
  border-left: 1px solid #a0a0a0;
  border-bottom: 2px solid #dcdcdc;
}

.sheet-area {
  flex: 1;
  border-top: 2px solid #808080;
  border-left: 2px solid #707070;
  background: #eaf5fc;
}

.sheet table {
  width: 668px;
  border-spacing: 0;
  table-layout: fixed;
  font: 10px/14px 'Open Sans', 'Segoe UI', sans-serif;
}

.c-nr {
  width: 46px;
}

.c-cod {
  width: 80px;
}

.c-art {
  width: 240px;
}

.c-um {
  width: 26px;
}

.c-qta {
  width: 76px;
}

.c-num {
  width: 100px;
}

th {
  height: 18px;
  padding: 0 0 0 2px;
  border-right: 2px solid #808080;
  border-bottom: 2px solid #808080;
  background: #f9f9f9;
  font-weight: 400;
  text-align: left;
  white-space: nowrap;
}

td {
  height: 17px;
  padding: 0 0 0 2px;
  border-right: 1px solid #85c0e8;
  border-bottom: 1px solid #85c0e8;
  overflow: hidden;
  white-space: nowrap;
}

.num {
  padding: 0 2px 0 0;
  text-align: right;
}

.dim {
  color: #5d6468;
}

.white {
  background: #fff;
}

.current {
  background: #0078d7;
  color: #d5e9fa;
  outline: 1px solid #e0733a;
  outline-offset: -1px;
}

.reader {
  display: flex;
  align-items: flex-start;
  height: 47px;
  padding: 3px 0 0 33px;
  border-top: 2px solid #00a3dc;
  border-bottom: 1px solid #d9d9d9;
}

.code {
  width: 23px;
  height: 20px;
  margin-right: 6px;
  background: #fff;
}

.red {
  width: 121px;
  margin-right: 8px;
  background: #f00;
}

.qta-label {
  width: 25px;
  margin-top: 5px;
}

.qta {
  width: 65px;
  margin-right: 15px;
}

.last {
  display: flex;
  width: 561px;
  height: 38px;
  margin: 0;
  padding: 0 5px;
  border: 1px dashed #cfcfcf;
  background: #fff;
}

.last legend {
  height: 13px;
  padding: 0 14px 0 3px;
  background: #f9f9f9;
}

.last-code {
  width: 113px;
  margin-right: 3px;
}

.last-name {
  width: 271px;
  margin-right: 4px;
}

.last-qty {
  width: 79px;
}

.foot {
  height: 25px;
  padding: 1px 0 0 33px;
}

.foot-panel {
  display: inline-grid;
  grid-template-columns: 10px repeat(8, 23px) 91px 146px;
  height: 24px;
  background: #fff;
  font-size: 12px;
}

.grip-f {
  height: 15px;
  margin: 4px 0 0 2px;
}
</style>
